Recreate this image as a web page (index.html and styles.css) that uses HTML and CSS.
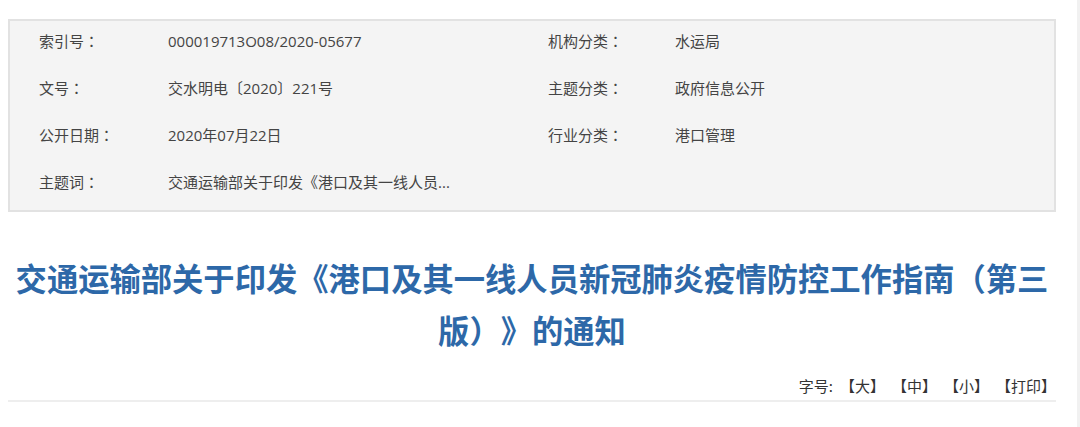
FILE: index.html
```html
<!DOCTYPE html>
<html lang="zh-CN">
<head>
    <meta charset="UTF-8">
    <meta name="viewport" content="width=device-width, initial-scale=1.0">
    <title>交通运输部关于印发《港口及其一线人员新冠肺炎疫情防控工作指南（第三版）》的通知</title>
<link rel="stylesheet" href="styles.css">
</head>
<body>
    <div class="wrap">
        <div class="info">
            <span class="label">索引号<i class="p" lang="zh-TW">：</i></span>
            <span class="value">000019713O08/2020-05677</span>
            <span class="label">机构分类<i class="p" lang="zh-TW">：</i></span>
            <span class="value">水运局</span>

            <span class="label">文号<i class="p" lang="zh-TW">：</i></span>
            <span class="value">交水明电〔2020〕221号</span>
            <span class="label">主题分类<i class="p" lang="zh-TW">：</i></span>
            <span class="value">政府信息公开</span>

            <span class="label">公开日期<i class="p" lang="zh-TW">：</i></span>
            <span class="value">2020年07月22日</span>
            <span class="label">行业分类<i class="p" lang="zh-TW">：</i></span>
            <span class="value">港口管理</span>

            <span class="label">主题词<i class="p" lang="zh-TW">：</i></span>
            <span class="value">交通运输部关于印发《港口及其一线人员...</span>
        </div>

        <h1 class="title">交通运输部关于印发《港口及其一线人员新冠肺炎疫情防控工作指南<i class="p" lang="zh-TW">（</i>第三版<i class="p" lang="zh-TW">）</i>》的通知</h1>

        <div class="tools">
            字号:<a href="#">【大】</a><a href="#">【中】</a><a href="#">【小】</a><a href="#">【打印】</a>
        </div>
    </div>
</body>
</html>
```
FILE: styles.css
```css
*{
    margin: 0;
    box-sizing: border-box;
}
body{
    background: #fff;
    padding: 19px 0 0 8px;
    min-height: 100vh;
    border-right: 3px solid #f1f1f1;
    font-family: "Open Sans", "Noto Sans CJK SC", sans-serif;
    font-size: 15px;
    color: #444;
    text-spacing-trim: space-all;
}
.wrap{
    width: 1048px;
}
/* centred full-width punctuation, like the original font */
.p{
    font-style: normal;
    font-family: "Noto Sans CJK TC", sans-serif;
}
.info{
    display: grid;
    grid-template-columns: 129px 380px 127px 1fr;
    row-gap: 27px;
    padding: 10px 0 18px 29px;
    background: #f4f4f4;
    border: 2px solid #e2e2e2;
    line-height: 20px;
}
.label, .value{
    white-space: nowrap;
}
.title{
    margin-top: 40px;
    text-align: center;
    font-family: "Noto Sans CJK SC", sans-serif;
    font-size: 31.3px;
    font-weight: bold;
    line-height: 52px;
    color: #2d68a8;
}
.tools{
    margin-top: 20px;
    padding: 0 0 4px 0;
    text-align: right;
    line-height: 20px;
    border-bottom: 2px solid #eeeeee;
    font-family: "Noto Sans CJK SC", sans-serif;
    color: #333;
}
.tools a{
    margin-left: 7px;
    color: #333;
    text-decoration: none;
}
```
